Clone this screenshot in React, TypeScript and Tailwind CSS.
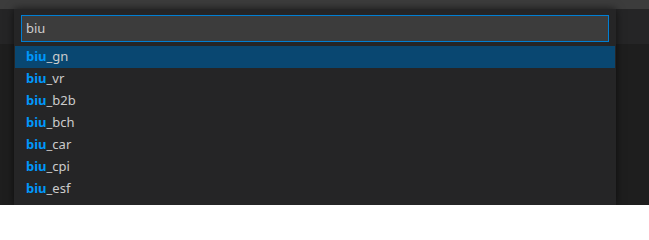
const items = ["gn", "vr", "b2b", "bch", "car", "cpi", "esf"];

const QuickPick = () => {
  return (
    <div className="absolute left-[14px] top-0 bottom-0 w-[602px] bg-[#252526] shadow-[0_0_8px_rgba(0,0,0,0.6)]">
      <div className="px-[7px] pt-[6px]">
        <div className="h-[27px] border border-[#007fd4] bg-[#3c3c3c] flex items-center pl-[4px] text-[13px] text-[#cccccc]">
          biu
        </div>
      </div>
      <div className="mt-[4px] px-px">
        {items.map((s, i) => (
          <div
            key={s}
            className={
              "h-[22px] flex items-center pl-[11px] text-[13px] text-[#cccccc] " +
              (i === 0 ? "bg-[#094771]" : "")
            }
          >
            <span className="font-bold text-[#0097fb]">biu</span>
            <span>_{s}</span>
          </div>
        ))}
      </div>
    </div>
  );
};

export default function App() {
  return (
    <div className="w-[649px] h-[205px] overflow-hidden flex flex-col bg-[#1e1e1e] font-['Noto_Sans',sans-serif]">
      <div className="h-[9px] bg-[#3c3c3c] shrink-0" />
      <div className="relative flex-1">
        <div className="h-[35px] bg-[#252526]" />
        <QuickPick />
      </div>
    </div>
  );
}
